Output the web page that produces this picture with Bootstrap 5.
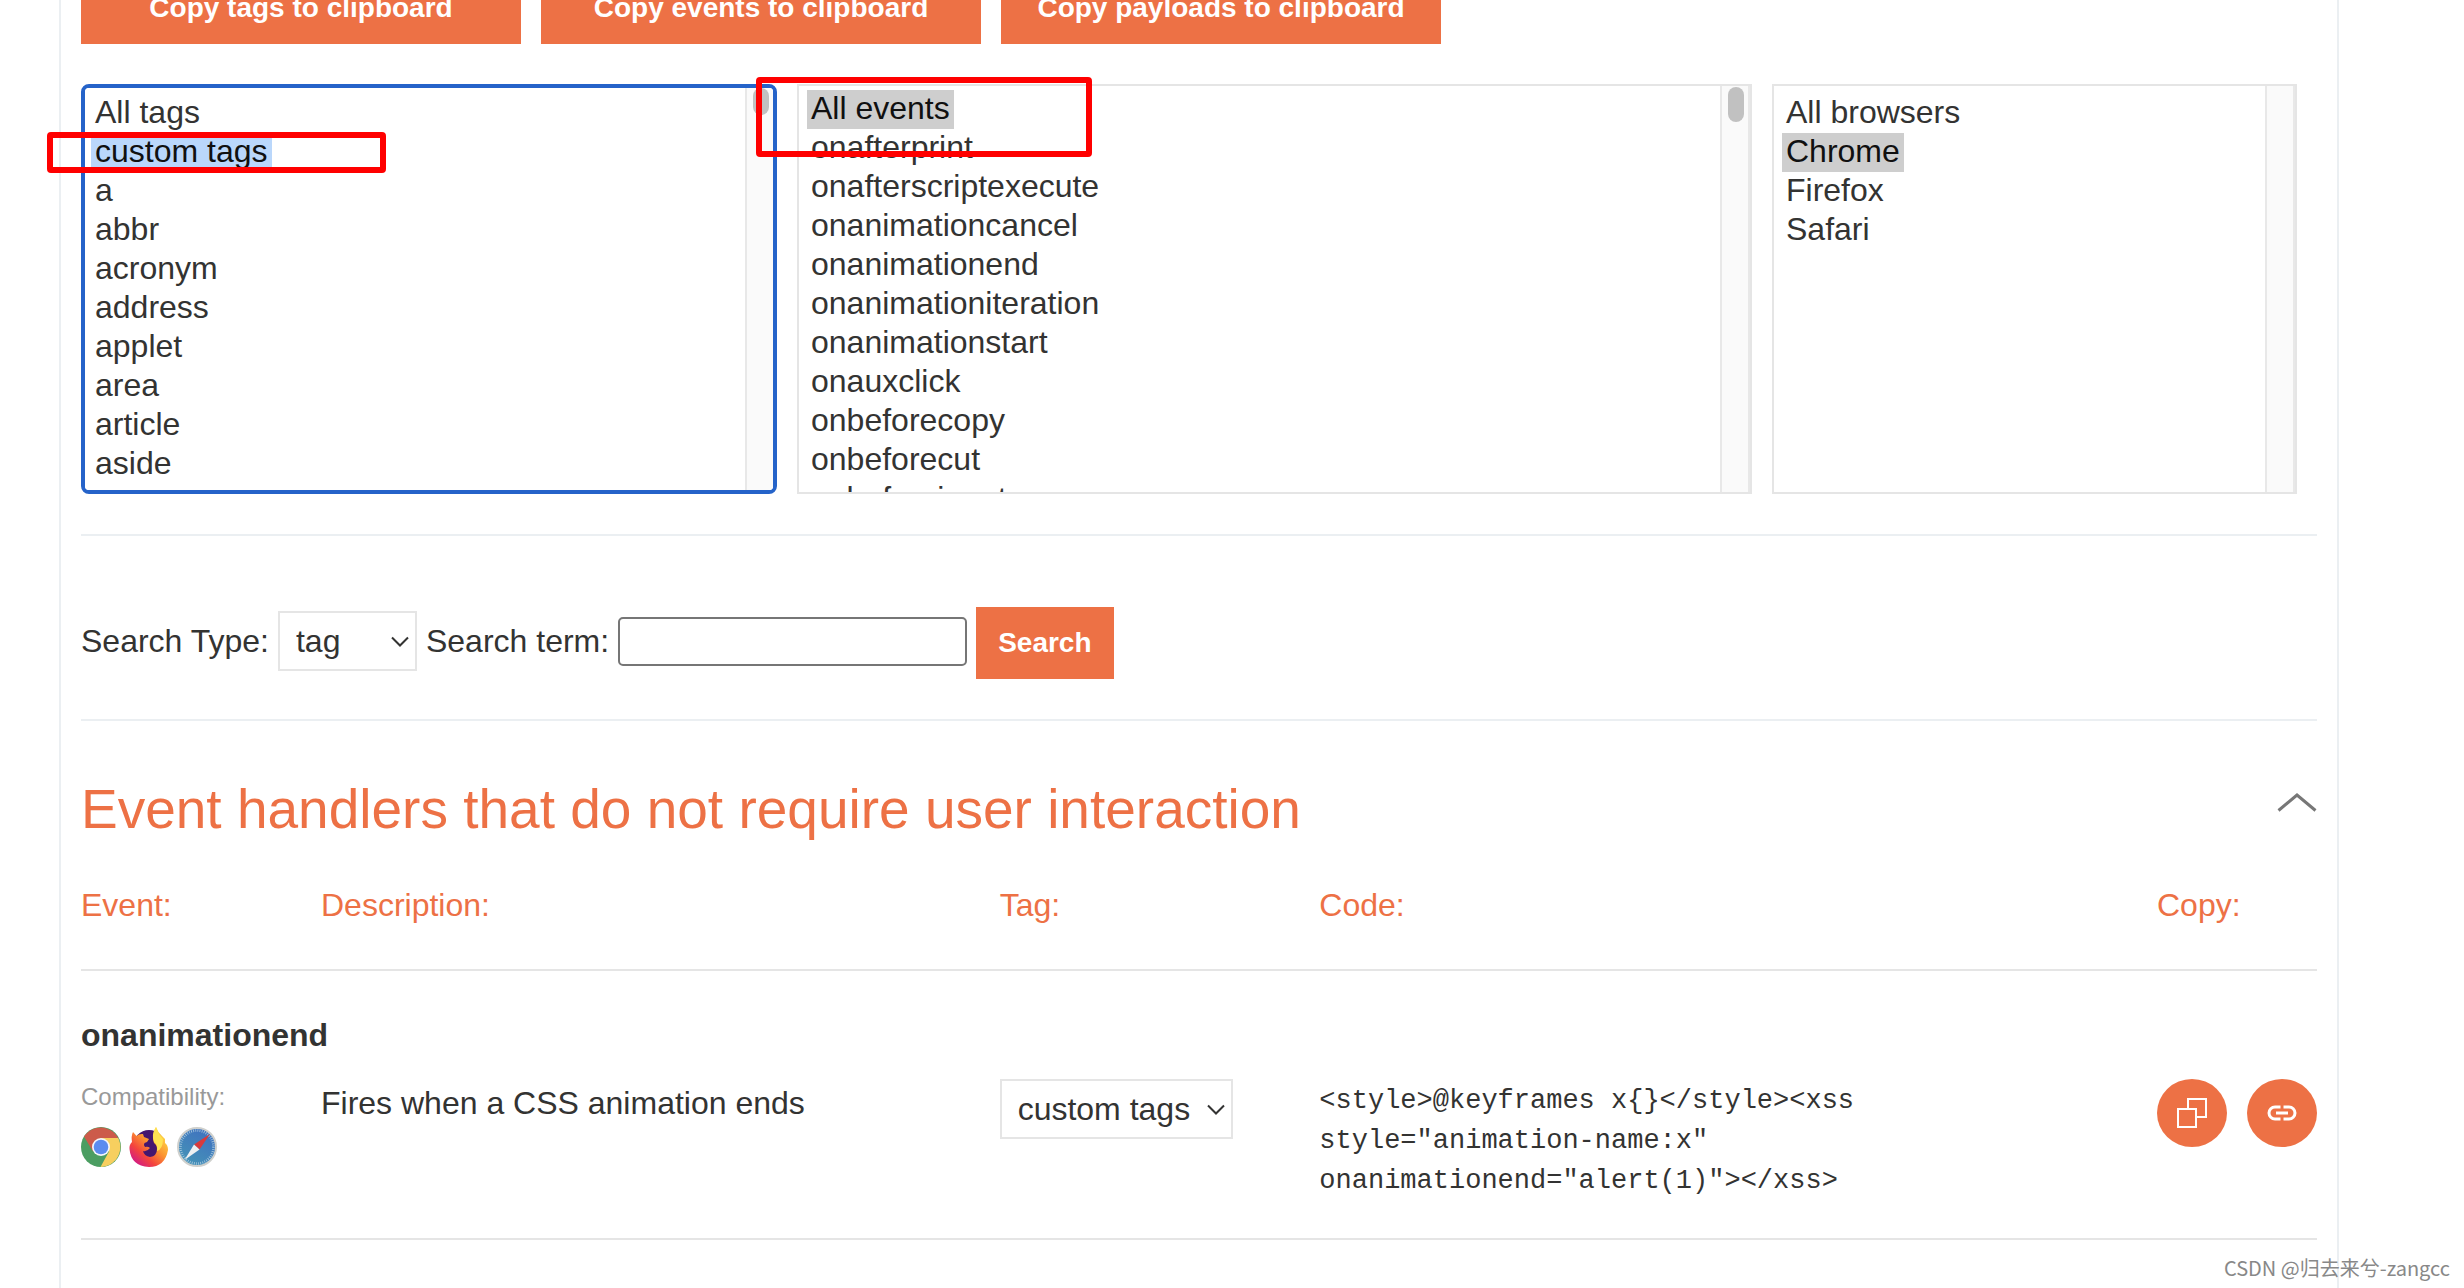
<!DOCTYPE html>
<html lang="en">
<head>
<meta charset="utf-8">
<meta name="viewport" content="width=device-width, initial-scale=1">
<title>XSS cheat sheet</title>
<link rel="stylesheet" href="https://cdn.jsdelivr.net/npm/bootstrap@5.3.0/dist/css/bootstrap.min.css">
<style>
  :root { --brand: #ed7145; --ink: #333332; --line: #e5e5e5; --rule: #ebeff2; }
  html, body { height: 100%; overflow: hidden; }
  body { font-family: "Liberation Sans", Arial, sans-serif; font-size: 32px; line-height: 40px; color: var(--ink); background: #fff; }
  .page-frame { min-height: calc(100% + 28px); margin: 0 125px 0 59px; padding: 0 20px; border: solid var(--rule); border-width: 0 2px; }
  /* the page is scrolled: the top of the button row is out of view */
  .copy-row { gap: 20px; margin-top: -28px; }
  .btn-brand { --bs-btn-color: #fff; --bs-btn-bg: var(--brand); --bs-btn-hover-color: #fff; --bs-btn-hover-bg: #d9623a; height: 72px; padding: 0 22px; border: 0; border-radius: 0; font-size: 28px; font-weight: 700; line-height: 32px; }
  .copy-row .btn-brand { width: 440px; }
  .filter-row { gap: 20px; margin: 40px 20px 40px 0; }
  .pick-list { position: relative; height: 410px; }
  .pick-tags { flex: 696 1 0; } .pick-events { flex: 955 1 0; } .pick-browsers { flex: 525 1 0; }
  .pick-list select { width: 100%; height: 100%; padding: 8px; border: 2px solid var(--line); border-radius: 0; background: #fff; color: var(--ink); font-size: 32px; outline: 0; overflow-x: hidden; scrollbar-width: none; }
  .pick-list option { width: fit-content; height: 39px; min-height: 0; padding: 0 4px; line-height: 38px; }
  .pick-tags select { padding: 6px; border: 4px solid #2563c9; border-radius: 8px; }
  .pick-tags option:checked { background-image: linear-gradient(#bad7fb, #bad7fb); }
  .pick-events select { padding-top: 4px; padding-bottom: 0; }
  .scroll-track { position: absolute; top: 2px; right: 2px; bottom: 2px; width: 30px; background: #fafafa; border: solid #e8e8e8; border-width: 0 2px; }
  .pick-tags .scroll-track { top: 4px; right: 4px; bottom: 4px; width: 28px; border-right: 0; border-radius: 0 4px 4px 0; }
  .scroll-thumb { width: 16px; height: 35px; margin: 1px auto 0 6px; border-radius: 8px; background: #c1c1c1; }
  .pick-tags .scroll-thumb { height: 27px; margin-top: 0; }
  .marker { position: absolute; border: 6px solid #f00; border-radius: 4px; pointer-events: none; z-index: 2; }
  .marker-tags { left: -34px; top: 48px; width: 339px; height: 41px; }
  .marker-events { left: -41px; top: -7px; width: 336px; height: 80px; }
  .divider { height: 2px; margin: 0; border: 0; opacity: 1; background: var(--rule); }
  .search-row { gap: 9px; margin: 71px 0 40px; }
  .chooser { height: 60px; padding: 0 40px 0 16px; border: 2px solid var(--line); border-radius: 0; color: var(--ink); font-size: 32px; line-height: 40px; appearance: none; background: transparent; }
  .chooser-wrap { position: relative; }
  .chooser-wrap svg { position: absolute; right: 8px; top: 25px; pointer-events: none; }
  .chooser-type { width: 139px; } .chooser-tag { width: 233px; padding-right: 20px; }
  .term-box { width: 349px; height: 49px; padding: 0 8px; border: 2px solid #767676; border-radius: 5px; font-size: 32px; }
  .section-head { margin: 56px 0 32px; }
  .section-head h2 { margin: 0; font-size: 55px; line-height: 64px; color: var(--brand); font-weight: 400; }
  .handlers { width: 100%; table-layout: fixed; }
  .handlers th, .handlers td { padding: 0; vertical-align: top; }
  .handlers thead th { padding: 12px 0 44px; color: var(--brand); font-weight: 400; border-bottom: 2px solid var(--line); }
  .col-event { width: 240px; } .col-text { width: 30.35%; } .col-pick { width: 14.3%; } .col-copy { width: 160px; }
  .handlers .event-name { padding: 44px 0 20px; font-weight: 700; }
  .handlers .details td { height: 164px; border-bottom: 2px solid var(--line); }
  .compat { font-size: 24px; line-height: 32px; color: #999; padding-top: 6px; }
  .browser-icons { gap: 8px; margin-top: 14px; }
  .browser-icons svg { width: 40px; height: 40px; display: block; }
  .handlers .details .about { padding-top: 8px; }
  .handlers .details .payload { padding: 6px 200px 0 0; }
  .payload code { display: block; font-family: "Liberation Mono", monospace; font-size: 27px; line-height: 40px; color: var(--ink); }
  .round-btn { width: 70px; height: 68px; padding: 0; border: 0; border-radius: 50%; background: var(--brand); display: flex; align-items: center; justify-content: center; }
  .watermark { position: absolute; right: 14px; bottom: 6px; font-family: "Noto Sans CJK SC", sans-serif; font-size: 20px; line-height: 28px; color: #888; text-shadow: -1px -1px 0 #fff; z-index: 3; }
</style>
<script src="https://cdn.jsdelivr.net/npm/bootstrap@5.3.0/dist/js/bootstrap.bundle.min.js"></script>
</head>
<body class="position-relative">
<main class="page-frame">
  <div class="copy-row d-flex">
    <button type="button" class="btn btn-brand">Copy tags to clipboard</button>
    <button type="button" class="btn btn-brand">Copy events to clipboard</button>
    <button type="button" class="btn btn-brand">Copy payloads to clipboard</button>
  </div>

  <div class="filter-row d-flex">
    <div class="pick-list pick-tags">
      <select multiple aria-label="Tags">
        <option>All tags</option><option selected>custom tags</option><option>a</option><option>abbr</option><option>acronym</option><option>address</option><option>applet</option><option>area</option><option>article</option><option>aside</option><option>audio</option><option>b</option><option>base</option><option>body</option>
      </select>
      <div class="scroll-track"><div class="scroll-thumb"></div></div>
      <div class="marker marker-tags"></div>
    </div>
    <div class="pick-list pick-events">
      <select multiple aria-label="Events">
        <option selected>All events</option><option>onafterprint</option><option>onafterscriptexecute</option><option>onanimationcancel</option><option>onanimationend</option><option>onanimationiteration</option><option>onanimationstart</option><option>onauxclick</option><option>onbeforecopy</option><option>onbeforecut</option><option>onbeforeinput</option><option>onbeforeprint</option><option>onblur</option>
      </select>
      <div class="scroll-track"><div class="scroll-thumb"></div></div>
      <div class="marker marker-events"></div>
    </div>
    <div class="pick-list pick-browsers">
      <select multiple aria-label="Browsers">
        <option>All browsers</option><option selected>Chrome</option><option>Firefox</option><option>Safari</option>
      </select>
      <div class="scroll-track"></div>
    </div>
  </div>

  <hr class="divider">
  <form class="search-row d-flex align-items-baseline">
    <label for="search-type">Search Type:</label>
    <div class="chooser-wrap">
      <select id="search-type" class="chooser chooser-type d-block"><option>tag</option><option>event</option></select>
      <svg width="18" height="12" viewBox="0 0 18 12" fill="none" stroke="#333332" stroke-width="2"><path d="M1 1.500L9 9.500L17 1.500"/></svg>
    </div>
    <label for="search-term">Search term:</label>
    <input id="search-term" type="text" class="term-box">
    <button type="submit" class="btn btn-brand">Search</button>
  </form>
  <hr class="divider">

  <section>
    <div class="section-head d-flex justify-content-between">
      <h2>Event handlers that do not require user interaction</h2>
      <button type="button" class="btn p-0 border-0 align-self-start pt-2" aria-label="Collapse section">
        <svg class="d-block mt-2" width="40" height="20" viewBox="0 0 40 20" fill="none" stroke="#777" stroke-width="3"><path d="M1.500 17.500L20 2L38.500 17.500"/></svg>
      </button>
    </div>
    <table class="handlers">
      <colgroup><col class="col-event"><col class="col-text"><col class="col-pick"><col><col class="col-copy"></colgroup>
      <thead><tr><th>Event:</th><th>Description:</th><th>Tag:</th><th>Code:</th><th>Copy:</th></tr></thead>
      <tbody>
        <tr><th colspan="5" class="event-name" scope="rowgroup">onanimationend</th></tr>
        <tr class="details">
          <td>
            <div class="compat">Compatibility:</div>
            <div class="browser-icons d-flex">
              <svg viewBox="0 0 40 40" role="img" aria-label="Chrome">
                <circle cx="20" cy="20" r="20" fill="#4b9e62"/>
                <path d="M3 9.500A20 20 0 0 1 37.200 11H20L12 24.500Z" fill="#cc5b4a"/>
                <path d="M37.200 11A20 20 0 0 1 19.500 40L28 24.500L20 11Z" fill="#f7cf5f"/>
                <circle cx="20" cy="20" r="9" fill="#f4f6fa"/><circle cx="20" cy="20" r="7.300" fill="#5b8cef"/>
              </svg>
              <svg viewBox="0 0 40 40" role="img" aria-label="Firefox">
                <defs><linearGradient id="fx" x1="0.900" y1="0.100" x2="0.200" y2="0.900"><stop offset="0" stop-color="#ffe24a"/><stop offset="0.450" stop-color="#fb9430"/><stop offset="0.750" stop-color="#f4453c"/><stop offset="1" stop-color="#d6207c"/></linearGradient></defs>
                <circle cx="20" cy="19" r="16" fill="#45166f"/>
                <path d="M4 5L7.500 9Q10 6.500 14 7L15 10L20 12Q19 15 15.500 16Q14 18 16 20Q19 19 21 21Q18 25 14 24Q15 29 21 30Q28 29 28 22Q28 18 25 16Q22 8 27 0Q29 5 32 8L36 12L36 16Q39 18 39 23Q36 40 20 40Q2 39 .5 22Q0 18 3 15Q2 9 4 5Z" fill="url(#fx)"/>
                <path d="M27 0Q22 8 25 15Q29 18 28 24Q34 22 34 12Q29 7 27 0Z" fill="#ffe252"/>
              </svg>
              <svg viewBox="0 0 40 40" role="img" aria-label="Safari">
                <defs><linearGradient id="sf" x1="0.800" y1="0" x2="0.200" y2="1"><stop offset="0" stop-color="#3f6fc0"/><stop offset="1" stop-color="#4595b6"/></linearGradient></defs>
                <circle cx="20" cy="20" r="19" fill="url(#sf)" stroke="#cfd0cd" stroke-width="2"/>
                <circle cx="20" cy="20" r="16.500" fill="none" stroke="#a7c7de" stroke-width="2.500" stroke-dasharray="0.800 1.360"/>
                <path d="M33 7L17 17.500L22.500 22.500Z" fill="#d93a3c"/><path d="M7.500 33L17 17.500L22.500 22.500Z" fill="#eef0f2"/>
              </svg>
            </div>
          </td>
          <td class="about">Fires when a CSS animation ends</td>
          <td>
            <div class="chooser-wrap d-inline-block mt-1">
              <select class="chooser chooser-tag d-block" aria-label="Tag"><option>custom tags</option></select>
              <svg width="18" height="12" viewBox="0 0 18 12" fill="none" stroke="#333332" stroke-width="2"><path d="M1 1.500L9 9.500L17 1.500"/></svg>
            </div>
          </td>
          <td class="payload"><code>&lt;style&gt;@keyframes x{}&lt;/style&gt;&lt;xss style="animation-name:x" onanimationend="alert(1)"&gt;&lt;/xss&gt;</code></td>
          <td>
            <div class="d-flex justify-content-between pt-1">
              <button type="button" class="round-btn" aria-label="Copy payload"><svg width="30" height="30" viewBox="0 0 30 30" fill="none" stroke="#fff" stroke-width="2"><path d="M1 11H19V29H1ZM11 11V1H29V19H19"/></svg></button>
              <button type="button" class="round-btn" aria-label="Copy link"><svg width="30" height="16" viewBox="0 0 30 16" fill="none" stroke="#fff" stroke-width="3"><path d="M13.500 2H8A6 6 0 0 0 8 14H13.500M16.500 2H22A6 6 0 0 1 22 14H16.500M9 8H21"/></svg></button>
            </div>
          </td>
        </tr>
      </tbody>
    </table>
  </section>
</main>
<div class="watermark">CSDN @归去来兮-zangcc</div>
</body>
</html>
